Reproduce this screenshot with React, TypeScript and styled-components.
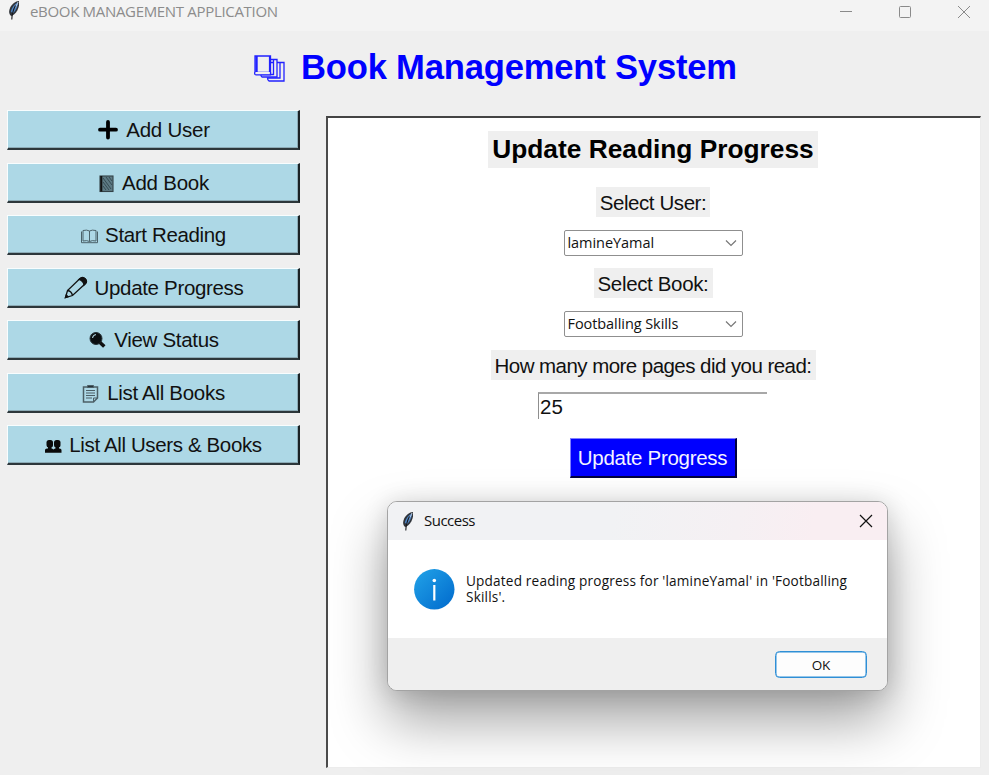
import React from "react";
import styled, { createGlobalStyle } from "styled-components";

const Global = createGlobalStyle`
  * { box-sizing: border-box; }
  html, body { margin: 0; padding: 0; background: #efefef; overflow: hidden; }
`;

const sans = `"Liberation Sans", Arial, sans-serif`;
const ui = `"Open Sans", "Noto Sans", sans-serif`;

const Window = styled.div`
  position: relative;
  width: 989px;
  height: 775px;
  display: flex;
  flex-direction: column;
  background: #efefef;
  color: #111;
  font-family: ${sans};
  overflow: hidden;
`;

const TitleBar = styled.header`
  height: 31px;
  flex: none;
  display: flex;
  align-items: flex-start;
  background: #f3f3f3;
  padding-left: 7px;
`;

const WindowTitle = styled.span`
  flex: 1;
  margin-left: 9px;
  font: 15px/22px ${ui};
  letter-spacing: -0.32px;
  color: #8c8c8c;
  white-space: nowrap;
`;

const Controls = styled.div`
  display: flex;
  gap: 45px;
  padding: 5px 18px 0 0;
`;

const Heading = styled.h1`
  height: 72px;
  flex: none;
  margin: 0;
  padding-left: 253px;
  display: flex;
  align-items: center;
  gap: 15px;
  font-size: 34.6px;
  line-height: 40px;
  letter-spacing: -0.19px;
  color: #0000ff;
  white-space: nowrap;
  svg { margin-top: 4px; }
`;

const Main = styled.main`
  flex: 1;
  min-height: 0;
  display: flex;
  gap: 26px;
  padding: 7px 8px 7px 7px;
`;

const Sidebar = styled.nav`
  width: 293px;
  flex: none;
  display: flex;
  flex-direction: column;
  gap: 12.5px;
`;

const MenuButton = styled.button`
  height: 40px;
  flex: none;
  padding: 1px 0 0;
  display: flex;
  align-items: center;
  justify-content: center;
  background: #add8e6;
  border: 2px solid;
  border-width: 1.5px 2px 2px 1.5px;
  border-color: #f8fdfe #1b2225 #2d373b #f8fdfe;
  box-shadow: inset -1px -1px 0 #8cabb6;
  color: #111;
  font: 20.5px/24px ${sans};
  white-space: nowrap;
`;

const IconSlot = styled.span<{ $w: number }>`
  width: ${(p) => p.$w}px;
  height: 24px;
  flex: none;
  svg { display: block; }
`;

const Caption = styled.span<{ $ls: number }>`
  letter-spacing: ${(p) => p.$ls}px;
`;

const Panel = styled.section`
  flex: 1;
  margin-top: 6px;
  height: 652px;
  background: #fff;
  border: 2px solid;
  border-color: #444 #ececec #ececec #4b4b4b;
  border-right-width: 1px;
  border-bottom-width: 1px;
  display: flex;
  flex-direction: column;
  align-items: center;
  padding: 13px 2px 0 0;
`;

const PanelTitle = styled.h2`
  width: 330px;
  height: 37px;
  margin: 0 0 19px;
  background: #efefef;
  color: #000;
  font-size: 26.3px;
  line-height: 37px;
  text-align: center;
  white-space: nowrap;
`;

const FieldLabel = styled.label<{ $w: number; $ls: number }>`
  width: ${(p) => p.$w}px;
  height: 30px;
  background: #efefef;
  font-size: 20.5px;
  line-height: 32px;
  letter-spacing: ${(p) => p.$ls}px;
  text-align: center;
  white-space: nowrap;
`;

const Combo = styled.div<{ $ls: number }>`
  width: 179px;
  height: 26px;
  margin: 12.7px 0;
  padding: 0 5px 0 3px;
  display: flex;
  align-items: center;
  justify-content: space-between;
  border: 1.5px solid #8f8f8f;
  border-radius: 2px;
  font: 14.5px/24px ${ui};
  letter-spacing: ${(p) => p.$ls}px;
  white-space: nowrap;
`;

const Entry = styled.div`
  width: 229px;
  height: 27px;
  margin: 12px 1px 19px 0;
  border-top: 2px solid #a8a8a8;
  border-left: 1px solid #8f8f8f;
  padding-left: 1px;
  font-size: 20.5px;
  line-height: 26px;
`;

const Submit = styled.button`
  width: 167px;
  height: 40px;
  padding: 0;
  background: #0000ff;
  border: 2px solid;
  border-width: 1.5px 2px 2px 1.5px;
  border-color: #8080ff #000040 #000040 #8080ff;
  color: #f4f4ff;
  font: 20.5px/38px ${sans};
  letter-spacing: -0.3px;
  white-space: nowrap;
`;

const Dialog = styled.div`
  position: absolute;
  left: 387px;
  top: 501px;
  width: 501px;
  height: 190px;
  display: flex;
  flex-direction: column;
  border: 1px solid #a3a3a3;
  border-radius: 10px;
  background: #fff;
  overflow: hidden;
  font-family: ${ui};
  box-shadow: 0 30px 56px rgba(0, 0, 0, 0.36), 0 2px 24px rgba(0, 0, 0, 0.14);
`;

const DialogBar = styled.div`
  height: 38px;
  flex: none;
  display: flex;
  align-items: center;
  padding: 0 14px 0 13px;
  background: linear-gradient(100deg, #f1f2f4 45%, #f5f0f3 70%, #f9eef2 85%);
`;

const DialogTitle = styled.span`
  flex: 1;
  margin: -2px 0 0 9px;
  font-size: 15px;
  letter-spacing: -0.5px;
  color: #111;
`;

const DialogBody = styled.div`
  flex: 1;
  display: flex;
  gap: 11px;
  padding: 28.5px 0 0 26px;
`;

const Message = styled.p`
  margin: 4.5px 0 0;
  font-size: 13.6px;
  line-height: 16px;
  letter-spacing: 0.18px;
  white-space: pre;
`;

const DialogFooter = styled.div`
  height: 52px;
  flex: none;
  display: flex;
  justify-content: flex-end;
  padding: 13px 20px 0 0;
  background: #efefef;
`;

const OkButton = styled.button`
  width: 92px;
  height: 27px;
  padding: 0;
  border: 1.6px solid #2f8fd6;
  border-radius: 4.5px;
  background: #fdfdfd;
  box-shadow: inset 0 0 0 0.5px #2f8fd6;
  color: #111;
  font: 13.5px/22px ${ui};
  letter-spacing: -0.2px;
`;

const Feather = () => (
  <svg width="14" height="20" viewBox="0 0 14 20">
    <path d="M12 1C8.500 1 5 4 3.200 7.500C1.800 10.500 1.700 13 3.200 15.200L4.600 16L7 14.500C10 12 11.500 8.500 12 5.500Z" fill="#30343a" />
    <path d="M10.800 2.200C7.500 4 4.800 7.500 3.800 11.500L5.800 13.500C8.900 10.500 10.300 7 10.800 4.200Z" fill="#4f86c6" />
    <path d="M11 2C10.800 4 9 5.500 8.200 7.500" stroke="#c6d1df" fill="none" />
    <path d="M8.500 5.500C6.600 9 5 13 4.800 19.500" stroke="#18191c" strokeWidth="1.100" fill="none" />
  </svg>
);

const Stack = () => (
  <svg width="33" height="30" viewBox="0 0 33 30" fill="#efefef" stroke="#2222ff" strokeWidth="1.300">
    <path d="M15 8.500H31V27H16Q14.500 26 14.500 24H27V8.500" />
    <path d="M8 5.500H24V23H9Q7.500 22 8 20.500H20.500V5.500" />
    <path d="M2 2H17.500V18.500H2Z" />
    <path d="M3.500 2V18" strokeWidth="2.400" />
    <path d="M16.800 2V18" strokeWidth="1.800" />
    <path d="M2 18Q1 20.800 3 20.800H17.500V18" />
  </svg>
);

const Plus = () => (
  <svg width="22" height="24" viewBox="0 0 22 24">
    <path d="M12 4V19.500M4 11.700H20" stroke="#000" strokeWidth="3.800" strokeLinecap="round" />
  </svg>
);

const Notebook = () => (
  <svg width="20" height="24" viewBox="0 0 20 24">
    <rect x="3" y="5" width="13" height="15.500" fill="#5d7a84" stroke="#344248" strokeWidth="1.100" />
    <path d="M4.300 5V20.500" stroke="#111" strokeWidth="2" />
    <path d="M6 7L14 18M6 11L12 19M9 6L15 14M6 15L9 19M12 6L15 10" stroke="#364b53" />
  </svg>
);

const OpenBook = () => (
  <svg width="20" height="24" viewBox="0 0 20 24" fill="none" stroke="#4b626a">
    <path d="M9.500 8Q7 6.500 3 7.500V18Q7 17 9.500 18.500Q12 17 16 18V7.500Q12 6.500 9.500 8V18.500" />
    <path d="M1.500 8.500V19.700H17.500V8.500" />
  </svg>
);

const Pencil = () => (
  <svg width="26" height="24" viewBox="0 0 26 24" fill="none" stroke="#111" strokeWidth="1.300">
    <path d="M2.500 21.500L4.500 14.500L17 2.500Q20 .5 22.300 3Q24.500 5.500 22.500 7.500L9.500 19.500Z" />
    <path d="M16 3.500L18 2Q20 .5 22.300 3Q24.500 5.500 22.500 7.500L21 9Q20.500 5 16 3.500Z" fill="#111" />
    <path d="M4.500 14.500Q8.500 15 9.500 19.500" />
    <path d="M2.500 21.500L3.300 19L5 20.700Z" fill="#111" />
  </svg>
);

const Magnifier = () => (
  <svg width="22" height="24" viewBox="0 0 22 24">
    <circle cx="9" cy="10.500" r="6" fill="#0b0f11" stroke="#263338" />
    <path d="M5.500 10Q6 7 9 6.500" stroke="#a9cbd6" strokeWidth="1.100" fill="none" />
    <path d="M13 14.500L17.300 18.500" stroke="#111" strokeWidth="3.600" />
  </svg>
);

const Clipboard = () => (
  <svg width="20" height="24" viewBox="0 0 20 24" fill="none" stroke="#4c5f66">
    <path d="M2.500 6H16.500V17L12.500 21H2.500Z" strokeWidth="1.500" />
    <path d="M16.500 17H12.500V21" />
    <path d="M6.500 4.500H12.500V6.500H6.500Z" fill="#26343a" />
    <path d="M5 9.500H14M5 12H14M5 14.500H14M5 17H11" />
  </svg>
);

const People = () => (
  <svg width="20" height="24" viewBox="0 0 20 24" fill="#0a0a0a">
    <rect x="2.500" y="7" width="6.500" height="7.500" rx="2.500" />
    <rect x="10" y="7" width="6.500" height="7.500" rx="2.500" />
    <path d="M4 13H7.500V16H4ZM11.500 13H15V16H11.500Z" />
    <path d="M1 19.800V17Q1 15.500 3 15.500H8L9.500 16.500L11 15.500H15.500Q17.500 15.500 17.500 17V19.800Z" />
  </svg>
);

const Chevron = () => (
  <svg width="12" height="8" viewBox="0 0 12 8" fill="none" stroke="#777" strokeWidth="1.200">
    <path d="M1 1.500L6 6.500L11 1.500" />
  </svg>
);

const Info = () => (
  <svg width="41" height="41" viewBox="0 0 41 41">
    <defs>
      <linearGradient id="infoFill" x1="0" y1="0" x2="1" y2="1">
        <stop offset="0" stopColor="#22a3e8" />
        <stop offset="1" stopColor="#0069cc" />
      </linearGradient>
    </defs>
    <circle cx="20.300" cy="20.300" r="20.200" fill="url(#infoFill)" />
    <circle cx="20.300" cy="11.500" r="1.800" fill="#fff" />
    <path d="M20.300 16V31.500" stroke="#fff" strokeWidth="2.200" />
  </svg>
);

const items = [
  { label: "Add User", icon: <Plus />, slot: 30, ls: -0.25 },
  { label: "Add Book", icon: <Notebook />, slot: 25, ls: -0.25 },
  { label: "Start Reading", icon: <OpenBook />, slot: 25, ls: -0.35 },
  { label: "Update Progress", icon: <Pencil />, slot: 32, ls: -0.33 },
  { label: "View Status", icon: <Magnifier />, slot: 27, ls: -0.3 },
  { label: "List All Books", icon: <Clipboard />, slot: 26, ls: -0.3 },
  { label: "List All Users & Books", icon: <People />, slot: 25, ls: -0.37 },
];

export default function App() {
  return (
    <Window>
      <Global />
      <TitleBar>
        <Feather />
        <WindowTitle>eBOOK MANAGEMENT APPLICATION</WindowTitle>
        <Controls>
          <svg width="14" height="14" viewBox="0 0 14 14" stroke="#8a8a8a">
            <path d="M1 6.500H13" />
          </svg>
          <svg width="14" height="14" viewBox="0 0 14 14" stroke="#8a8a8a" fill="none">
            <rect x="1.500" y="1.500" width="11" height="11" rx="1" />
          </svg>
          <svg width="14" height="14" viewBox="0 0 14 14" stroke="#8a8a8a">
            <path d="M1 1L13 13M13 1L1 13" />
          </svg>
        </Controls>
      </TitleBar>
      <Heading>
        <Stack />
        <span>Book Management System</span>
      </Heading>
      <Main>
        <Sidebar>
          {items.map((item) => (
            <MenuButton key={item.label}>
              <IconSlot $w={item.slot}>{item.icon}</IconSlot>
              <Caption $ls={item.ls}>{item.label}</Caption>
            </MenuButton>
          ))}
        </Sidebar>
        <Panel>
          <PanelTitle>Update Reading Progress</PanelTitle>
          <FieldLabel $w={114} $ls={-0.42}>Select User:</FieldLabel>
          <Combo $ls={-0.05}>
            lamineYamal
            <Chevron />
          </Combo>
          <FieldLabel $w={119} $ls={-0.35}>Select Book:</FieldLabel>
          <Combo $ls={-0.07}>
            Footballing Skills
            <Chevron />
          </Combo>
          <FieldLabel $w={325} $ls={-0.55}>How many more pages did you read:</FieldLabel>
          <Entry>25</Entry>
          <Submit>Update Progress</Submit>
        </Panel>
      </Main>
      <Dialog>
        <DialogBar>
          <Feather />
          <DialogTitle>Success</DialogTitle>
          <svg width="14" height="14" viewBox="0 0 14 14" stroke="#111" strokeWidth="1.200">
            <path d="M1 1L13 13M13 1L1 13" />
          </svg>
        </DialogBar>
        <DialogBody>
          <Info />
          <Message>{"Updated reading progress for 'lamineYamal' in 'Footballing\nSkills'."}</Message>
        </DialogBody>
        <DialogFooter>
          <OkButton>OK</OkButton>
        </DialogFooter>
      </Dialog>
    </Window>
  );
}
